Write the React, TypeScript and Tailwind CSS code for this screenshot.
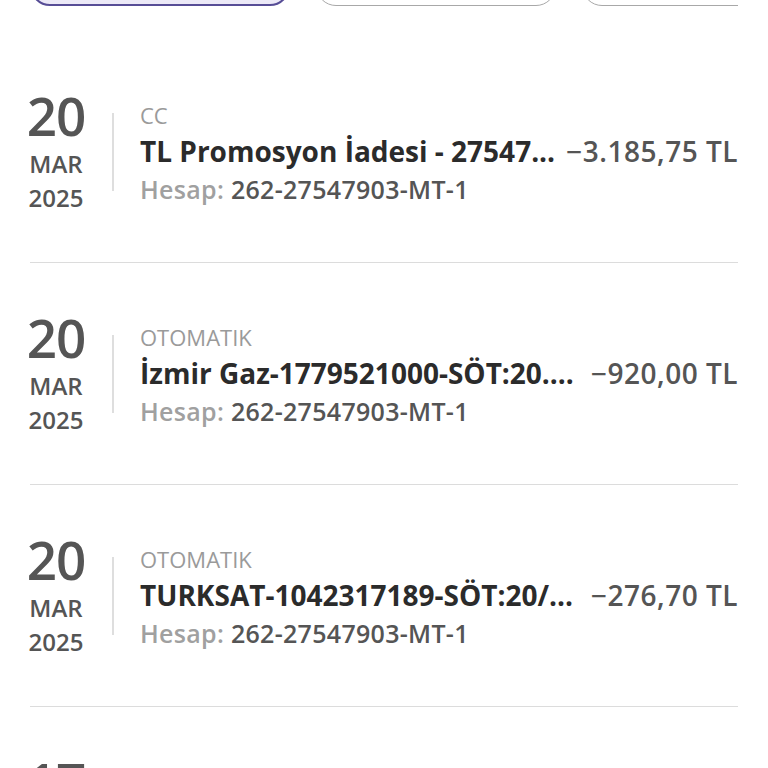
import React from 'react'

type Tx = {
  day: string
  month: string
  year: string
  kind: string
  title: string
  amount: string
  account: string
}

const TXS: Tx[] = [
  { day: '20', month: 'MAR', year: '2025', kind: 'CC', title: 'TL Promosyon İadesi - 27547...', amount: '−3.185,75 TL', account: '262-27547903-MT-1' },
  { day: '20', month: 'MAR', year: '2025', kind: 'OTOMATIK', title: 'İzmir Gaz-1779521000-SÖT:20....', amount: '−920,00 TL', account: '262-27547903-MT-1' },
  { day: '20', month: 'MAR', year: '2025', kind: 'OTOMATIK', title: 'TURKSAT-1042317189-SÖT:20/...', amount: '−276,70 TL', account: '262-27547903-MT-1' },
  { day: '17', month: 'MAR', year: '2025', kind: 'OTOMATIK', title: 'Turkcell-5321234567-SÖT:17/...', amount: '−450,00 TL', account: '262-27547903-MT-1' },
]

function Row({ tx }: { tx: Tx }) {
  return (
    <div className="flex h-[222px] items-center border-b border-[#dcdcdc]">
      <div className="flex w-[52px] shrink-0 flex-col items-center text-[#555]">
        <span className="text-[53px] font-semibold leading-[54px] tracking-[-1px]">{tx.day}</span>
        <span className="mt-[4px] text-[24px] font-semibold leading-[34px]">{tx.month}</span>
        <span className="text-[24px] font-semibold leading-[34px]">{tx.year}</span>
      </div>
      <div className="ml-[30px] h-[78px] w-[2px] shrink-0 bg-[#dedede]" />
      <div className="ml-[26px] flex min-w-0 flex-1 flex-col">
        <span className="text-[22px] leading-[36px] text-[#9a9a9a]">{tx.kind}</span>
        <div className="flex items-center justify-between gap-[10px]">
          <span className="whitespace-nowrap text-[28px] font-bold leading-[36px] text-[#2b2b2b]">{tx.title}</span>
          <span className="whitespace-nowrap text-[28px] font-semibold leading-[36px] tracking-[0.5px] text-[#555]">{tx.amount}</span>
        </div>
        <span className="mt-[2px] text-[25px] font-semibold leading-[36px] tracking-[0.3px] text-[#555]">
          <span className="text-[#a0a0a0]">Hesap: </span>
          {tx.account}
        </span>
      </div>
    </div>
  )
}

export default function App() {
  return (
    <div className="min-h-screen bg-white" style={{ fontFamily: '"Open Sans", "Noto Sans", sans-serif' }}>
      <div className="mx-[30px]">
        <div className="flex h-[6px] items-end gap-[26px] overflow-hidden">
          <div className="h-[40px] w-[260px] shrink-0 rounded-[22px] border-2 border-[#574d96] bg-[#ece9f7]" />
          <div className="h-[40px] w-[240px] shrink-0 rounded-[22px] border border-[#a8a8a8]" />
          <div className="h-[40px] w-[240px] shrink-0 rounded-[22px] border border-[#a8a8a8]" />
        </div>
        <div className="h-[35px]" />
        {TXS.map((tx, i) => (
          <Row key={i} tx={tx} />
        ))}
      </div>
    </div>
  )
}
